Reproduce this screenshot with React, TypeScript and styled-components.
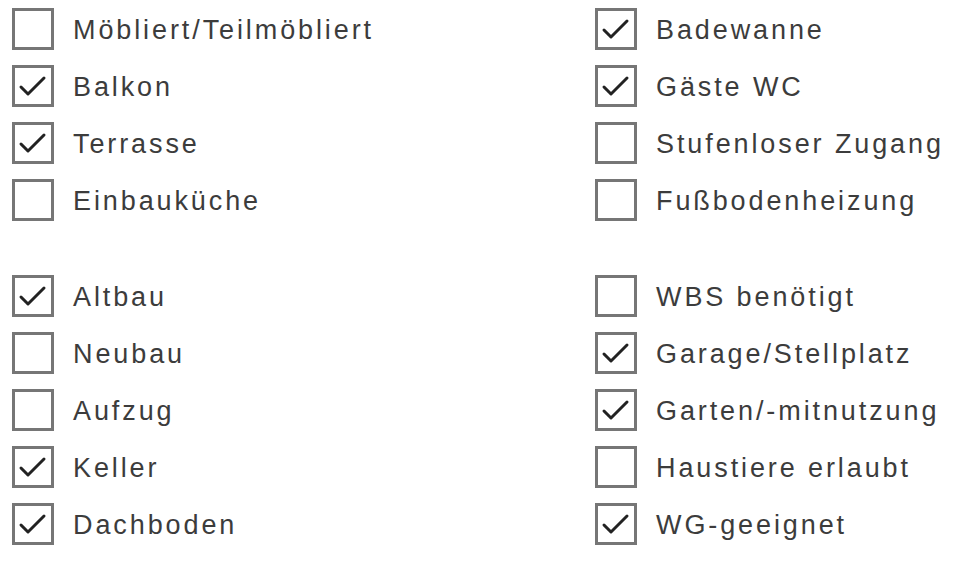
import styled, { createGlobalStyle } from "styled-components";

const GlobalStyle = createGlobalStyle`
  html, body {
    margin: 0;
    padding: 0;
    background: #ffffff;
  }
`;

const groupsLeft = [
  [
    { label: "Möbliert/Teilmöbliert", checked: false },
    { label: "Balkon", checked: true },
    { label: "Terrasse", checked: true },
    { label: "Einbauküche", checked: false },
  ],
  [
    { label: "Altbau", checked: true },
    { label: "Neubau", checked: false },
    { label: "Aufzug", checked: false },
    { label: "Keller", checked: true },
    { label: "Dachboden", checked: true },
  ],
];

const groupsRight = [
  [
    { label: "Badewanne", checked: true },
    { label: "Gäste WC", checked: true },
    { label: "Stufenloser Zugang", checked: false },
    { label: "Fußbodenheizung", checked: false },
  ],
  [
    { label: "WBS benötigt", checked: false },
    { label: "Garage/Stellplatz", checked: true },
    { label: "Garten/-mitnutzung", checked: true },
    { label: "Haustiere erlaubt", checked: false },
    { label: "WG-geeignet", checked: true },
  ],
];

const CheckItem = (props: { label: string; checked: boolean }) => {
  return (
    <Row>
      <Box>
        {props.checked && (
          <svg width="35" height="35" viewBox="0 0 35 35">
            <polyline
              points="5,19 12,26 28,10"
              fill="none"
              stroke="#222222"
              strokeWidth="3"
              strokeLinecap="round"
              strokeLinejoin="round"
            />
          </svg>
        )}
      </Box>
      <Label>{props.label}</Label>
    </Row>
  );
};

const Column = (props: { groups: { label: string; checked: boolean }[][] }) => {
  return (
    <ColumnWrapper>
      {props.groups.map((group, i) => (
        <Group key={i}>
          {group.map((item) => (
            <CheckItem key={item.label} label={item.label} checked={item.checked} />
          ))}
        </Group>
      ))}
    </ColumnWrapper>
  );
};

const App = () => {
  return (
    <>
      <GlobalStyle />
      <Page>
        <Column groups={groupsLeft} />
        <Column groups={groupsRight} />
      </Page>
    </>
  );
};

export default App;

const Page = styled.div`
  display: grid;
  grid-template-columns: 583px 1fr;
  padding: 0 0 0 12px;
  width: 960px;
  height: 563px;
  box-sizing: border-box;
  overflow: hidden;
`;

const ColumnWrapper = styled.div`
  display: flex;
  flex-direction: column;
  gap: 39px;
`;

const Group = styled.div`
  display: flex;
  flex-direction: column;
`;

const Row = styled.div`
  display: flex;
  align-items: center;
  height: 57px;
`;

const Box = styled.div`
  width: 42px;
  height: 42px;
  box-sizing: border-box;
  border: 3.5px solid #767676;
  background: #ffffff;
  display: flex;
  align-items: center;
  justify-content: center;
  flex-shrink: 0;
`;

const Label = styled.span`
  margin-left: 19px;
  padding-top: 3px;
  font-family: "Liberation Sans", Arial, sans-serif;
  font-size: 27px;
  letter-spacing: 2.9px;
  color: #3c3c3c;
  white-space: nowrap;
`;
